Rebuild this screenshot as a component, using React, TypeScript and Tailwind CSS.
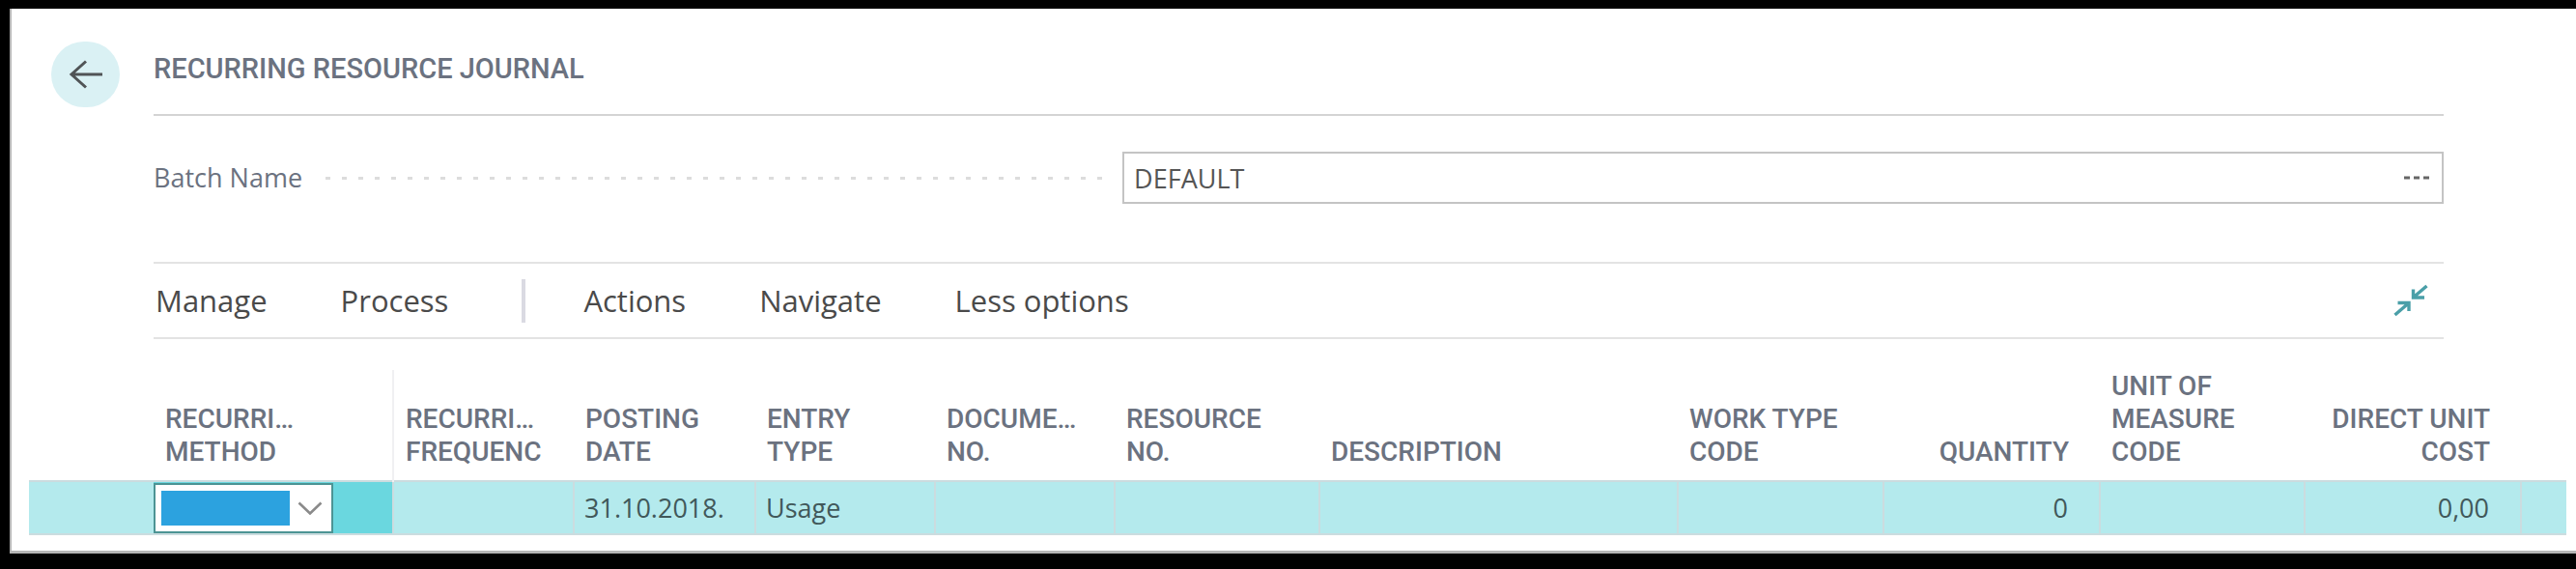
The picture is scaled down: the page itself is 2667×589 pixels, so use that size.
import clsx from "clsx";

type Column = {
  title: string[];
  width: string;
  value?: string;
  right?: boolean;
};

// the description column has no width and takes what is left
const columns: Column[] = [
  { title: ["RECURRI…", "FREQUENC"], width: "w-[187px]" },
  { title: ["POSTING", "DATE"], width: "w-[188px]", value: "31.10.2018." },
  { title: ["ENTRY", "TYPE"], width: "w-[186px]", value: "Usage" },
  { title: ["DOCUME…", "NO."], width: "w-[186px]" },
  { title: ["RESOURCE", "NO."], width: "w-[212px]" },
  { title: ["DESCRIPTION"], width: "" },
  { title: ["WORK TYPE", "CODE"], width: "w-[213px]" },
  { title: ["QUANTITY"], width: "w-[224px]", value: "0", right: true },
  { title: ["UNIT OF", "MEASURE", "CODE"], width: "w-[212px]" },
  { title: ["DIRECT UNIT", "COST"], width: "w-[224px]", value: "0,00", right: true },
];

function ToolbarButton({ children }: { children: string }) {
  return (
    <button type="button" className="text-[31px] text-[#4a4a4a]">
      {children}
    </button>
  );
}

function BackButton() {
  return (
    <button
      type="button"
      aria-label="Back"
      className="flex h-[68px] w-[71px] items-center justify-center rounded-full bg-[#daf1f4]"
    >
      <svg width="36" height="30" viewBox="0 0 36 30" fill="none" stroke="#505456" strokeWidth="3">
        <path d="M35 15H3M18 1.500L3 15l15 13.500" />
      </svg>
    </button>
  );
}

function BatchField() {
  return (
    <div className="mt-[37px] grid grid-cols-[11fr_15fr]">
      <div className="flex items-center">
        <label htmlFor="batch" className="text-[27px] text-[#6b7280]">
          Batch Name
        </label>
        <span className="mr-5 ml-6 h-[3px] flex-1 bg-[repeating-linear-gradient(90deg,#dcdcdc_0_5px,transparent_5px_17px)]" />
      </div>
      <div className="flex h-[54px] items-center border-2 border-[#c4c4c4]">
        <input
          id="batch"
          defaultValue="DEFAULT"
          className="h-full min-w-0 flex-1 pl-[10px] text-[27px] text-[#555] outline-none"
        />
        <button type="button" aria-label="Look up" className="px-3">
          <svg width="28" height="4" viewBox="0 0 28 4" fill="#666">
            <path d="M1 .5h6v3H1zM11 .5h6v3h-6zM21 .5h6v3h-6z" />
          </svg>
        </button>
      </div>
    </div>
  );
}

function Toolbar() {
  return (
    <div className="mt-[60px] flex h-20 items-center gap-[76px] border-y-2 border-[#e3e3e3] pl-0.5">
      <ToolbarButton>Manage</ToolbarButton>
      <ToolbarButton>Process</ToolbarButton>
      <span className="-mr-4 h-[45px] w-1 bg-[#dadae2]" />
      <ToolbarButton>Actions</ToolbarButton>
      <ToolbarButton>Navigate</ToolbarButton>
      <ToolbarButton>Less options</ToolbarButton>
      <button type="button" aria-label="Collapse" className="mr-4 ml-auto">
        <svg width="36" height="34" viewBox="0 0 36 34" fill="none" stroke="#4a9fa8" strokeWidth="3.4">
          <path d="M34.500 2L21 13.500M20.500 5.500v8.500h11.500" />
          <path d="M1.500 32L15.500 20M4.500 19.500H16V28" />
        </svg>
      </button>
    </div>
  );
}

function JournalLines() {
  return (
    <table className="w-full table-fixed border-collapse">
      <thead>
        <tr className="align-bottom text-[28px] leading-[34px] text-[#6b7280]">
          <td className="w-[129px]" />
          <th className="w-[248px] border-r-2 border-[#f0f0f2] pb-3 pl-3 text-left font-medium">
            RECURRI…
            <br />
            METHOD
          </th>
          {columns.map((col) => (
            <th
              key={col.title.join(" ")}
              className={clsx(
                "pb-3 font-medium whitespace-nowrap",
                col.width,
                col.right ? "pr-8 text-right" : "pl-3 text-left"
              )}
            >
              {col.title.map((line) => (
                <span key={line} className="block">
                  {line}
                </span>
              ))}
            </th>
          ))}
          <td className="w-[47px]" />
        </tr>
      </thead>
      <tbody className="font-['Open_Sans','Noto_Sans',sans-serif]">
        <tr className="h-[55px] border-y-2 border-[#cbdcdf] bg-[#b4eaed] text-[27px] leading-[34px] text-[#41585a]">
          <td />
          <td className="border-r-2 border-[#cbdcdf] bg-[#6ad7df] p-0">
            <div className="flex h-[52px] w-[186px] items-center border-2 border-[#4c9494] bg-white pl-[6px]">
              <select
                aria-label="Recurring method"
                className="h-9 w-[133px] appearance-none bg-[#2ca2df] outline-none"
              />
              <svg className="ml-2" width="26" height="14" viewBox="0 0 26 14" fill="none" stroke="#8a8a8a" strokeWidth="2.6">
                <path d="M1.500 1.500L13 12.500 24.500 1.500" />
              </svg>
            </div>
          </td>
          {columns.map((col) => (
            <td
              key={col.title.join(" ")}
              className={clsx(
                "border-r-2 border-[#cbdcdf] py-0",
                col.right ? "pr-8 text-right" : "pl-[10px]"
              )}
            >
              {col.value}
            </td>
          ))}
          <td />
        </tr>
      </tbody>
    </table>
  );
}

export default function App() {
  return (
    <div className="min-h-screen bg-black pt-[9px] pl-[10px]">
      <main className="border-b-3 border-l-2 border-[#b5b5b5] bg-white pb-4 font-['Roboto',sans-serif]">
        <div className="flex">
          <div className="w-[147px] pt-[34px] pl-[41px]">
            <BackButton />
          </div>
          <div className="mr-[137px] flex-1 font-['Open_Sans','Noto_Sans',sans-serif]">
            <h1 className="border-b-2 border-[#d4d4d4] pt-[45px] pb-[30px] font-['Roboto',sans-serif] text-[29px] leading-[34px] font-medium text-[#6b7280]">
              RECURRING RESOURCE JOURNAL
            </h1>
            <BatchField />
            <Toolbar />
          </div>
        </div>
        <div className="mt-8 mr-[10px] ml-[18px]">
          <JournalLines />
        </div>
      </main>
    </div>
  );
}
